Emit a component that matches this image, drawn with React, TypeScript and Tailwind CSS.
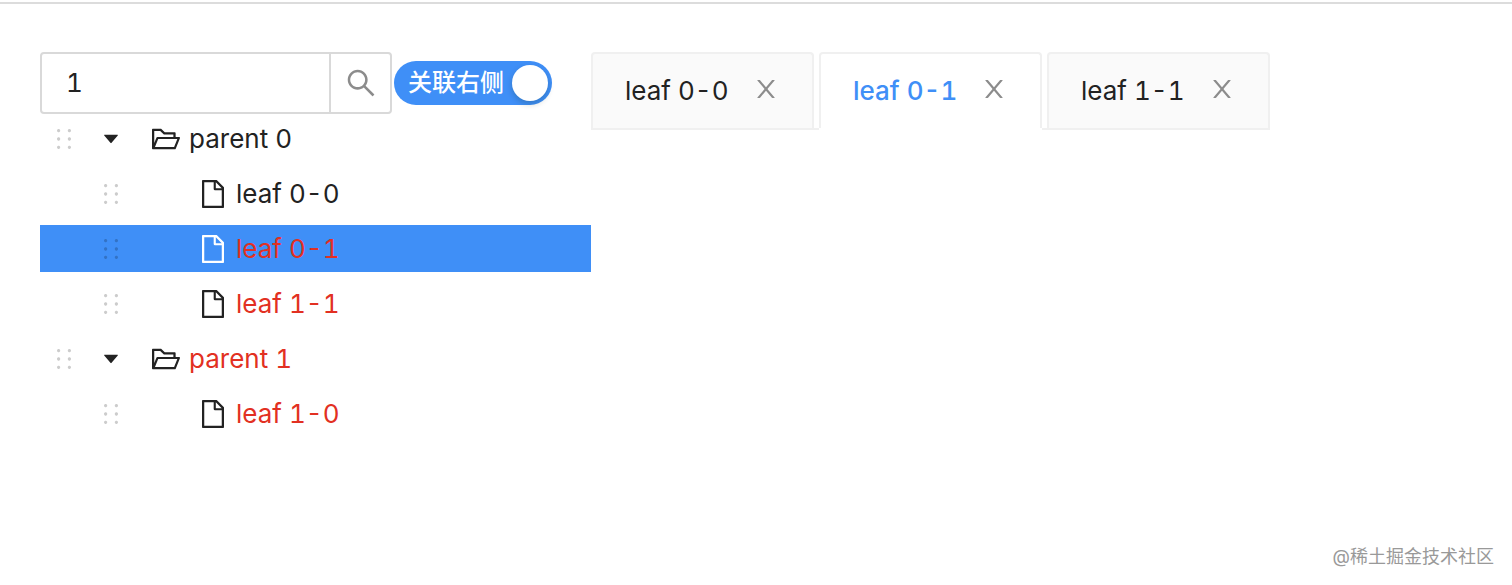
import { useState } from 'react';
import clsx from 'clsx';
import {
  AiFillCaretDown,
  AiOutlineFile,
  AiOutlineFolderOpen,
  AiOutlineHolder,
  AiOutlineSearch,
} from 'react-icons/ai';

interface TreeItem {
  title: string;
  children?: TreeItem[];
}

const treeData: TreeItem[] = [
  {
    title: 'parent 0',
    children: [{ title: 'leaf 0-0' }, { title: 'leaf 0-1' }, { title: 'leaf 1-1' }],
  },
  { title: 'parent 1', children: [{ title: 'leaf 1-0' }] },
];

const tabs = ['leaf 0-0', 'leaf 0-1', 'leaf 1-1'];

const CloseIcon = () => (
  <svg viewBox="0 0 1024 1024" className="size-7" fill="currentColor" aria-hidden="true">
    <path d="M563.8 512l262.5-312.9c4.4-5.2.7-13.1-6.1-13.1h-79.8c-4.7 0-9.2 2.1-12.3 5.7L511.6 449.8 295.1 191.7c-3-3.6-7.5-5.7-12.3-5.7H203c-6.8 0-10.5 7.9-6.1 13.1L459.4 512 196.9 824.9A7.95 7.95 0 0 0 203 838h79.8c4.7 0 9.2-2.1 12.3-5.7l216.5-258.1 216.5 258.1c3 3.6 7.5 5.7 12.3 5.7h79.8c6.8 0 10.5-7.9 6.1-13.1L563.8 512z" />
  </svg>
);

interface TreeNodeProps {
  item: TreeItem;
  keyword: string;
  selected: string;
  onSelect: (title: string) => void;
}

const TreeNode = ({ item, keyword, selected, onSelect }: TreeNodeProps) => {
  const [open, setOpen] = useState(true);
  const active = item.title === selected;
  const matched = keyword !== '' && item.title.includes(keyword);

  return (
    <li role="treeitem" aria-selected={active} aria-expanded={item.children ? open : undefined}>
      <div
        className={clsx(
          'mb-2 flex h-[47px] items-center',
          item.children ? 'pl-0' : 'pl-[47px]',
          active && 'bg-[#3f8ff7]'
        )}
      >
        <span className="flex w-[47px] justify-center text-black/20">
          <AiOutlineHolder size={30} />
        </span>
        <span className="flex w-[47px] justify-center">
          {item.children && (
            <button type="button" aria-label="toggle" onClick={() => setOpen(!open)}>
              <AiFillCaretDown size={20} />
            </button>
          )}
        </span>
        <button
          type="button"
          className="flex items-center pl-2 text-left"
          onClick={() => onSelect(item.title)}
        >
          <span className={clsx('flex w-[47px] justify-center', active && 'text-white')}>
            {item.children ? <AiOutlineFolderOpen size={32} /> : <AiOutlineFile size={32} />}
          </span>
          <span className={clsx(matched && 'text-[#e23022]')}>{item.title}</span>
        </button>
      </div>
      {item.children && open && (
        <ul role="group">
          {item.children.map((child) => (
            <TreeNode
              key={child.title}
              item={child}
              keyword={keyword}
              selected={selected}
              onSelect={onSelect}
            />
          ))}
        </ul>
      )}
    </li>
  );
};

export default function App() {
  const [keyword, setKeyword] = useState('1');
  const [selected, setSelected] = useState('leaf 0-1');
  const [linked, setLinked] = useState(true);

  return (
    <div className="flex min-h-screen flex-col bg-white font-['Inter','Noto_Sans_CJK_SC',sans-serif] text-[26px] leading-10 text-[#222] tabular-nums">
      <div className="h-1 border-b-2 border-[#dcdcdc]" />

      <main className="flex items-start pt-12 pl-10">
        <aside className="w-[551px] shrink-0">
          <div className="mb-px flex items-center">
            <div className="flex h-[62px] w-[352px] rounded-sm border-2 border-[#d9d9d9]">
              <input
                type="text"
                aria-label="search"
                className="min-w-0 flex-1 px-6 outline-none"
                value={keyword}
                onChange={(e) => setKeyword(e.target.value)}
              />
              <button
                type="button"
                aria-label="search"
                className="flex w-[61px] items-center justify-center border-l-2 border-[#d9d9d9] text-[#8c8c8c]"
              >
                <AiOutlineSearch size={34} />
              </button>
            </div>
            <button
              type="button"
              role="switch"
              aria-checked={linked}
              onClick={() => setLinked(!linked)}
              className={clsx(
                'ml-[2px] flex h-11 w-[158px] items-center justify-between rounded-full pr-1 pl-[14px] text-white',
                linked ? 'bg-[#3f8ff7]' : 'flex-row-reverse bg-[#bfbfbf]'
              )}
            >
              <span className="text-2xl font-medium">关联右侧</span>
              <span className="size-9 rounded-full bg-white shadow-[0_3px_6px_rgba(0,35,11,0.2)]" />
            </button>
          </div>

          <ul role="tree">
            {treeData.map((item) => (
              <TreeNode
                key={item.title}
                item={item}
                keyword={keyword}
                selected={selected}
                onSelect={setSelected}
              />
            ))}
          </ul>
        </aside>

        <div role="tablist" className="flex">
          {tabs.map((tab, index) => {
            const active = tab === selected;
            return (
              <div
                key={tab}
                className={clsx(
                  'border-b-2',
                  active ? 'border-transparent' : 'border-[#f0f0f0]',
                  !active && index < tabs.indexOf(selected) && 'pr-[5px]',
                  !active && index > tabs.indexOf(selected) && 'pl-[5px]'
                )}
              >
                <div
                  className={clsx(
                    'flex h-[76px] w-[223px] items-center justify-between rounded-t-sm border-2 border-b-0 border-[#f0f0f0] px-8',
                    active ? 'bg-white' : 'bg-[#fafafa]'
                  )}
                >
                  <button
                    type="button"
                    role="tab"
                    aria-selected={active}
                    className={clsx(active && 'font-medium text-[#3f8ff7]')}
                    onClick={() => setSelected(tab)}
                  >
                    {tab}
                  </button>
                  <button
                    type="button"
                    aria-label={`close ${tab}`}
                    className="pb-1 text-[#8c8c8c]"
                  >
                    <CloseIcon />
                  </button>
                </div>
              </div>
            );
          })}
        </div>
      </main>

      <footer className="mt-auto pr-[18px] pb-4 text-right text-lg leading-6 text-[#999]">
        @稀土掘金技术社区
      </footer>
    </div>
  );
}
